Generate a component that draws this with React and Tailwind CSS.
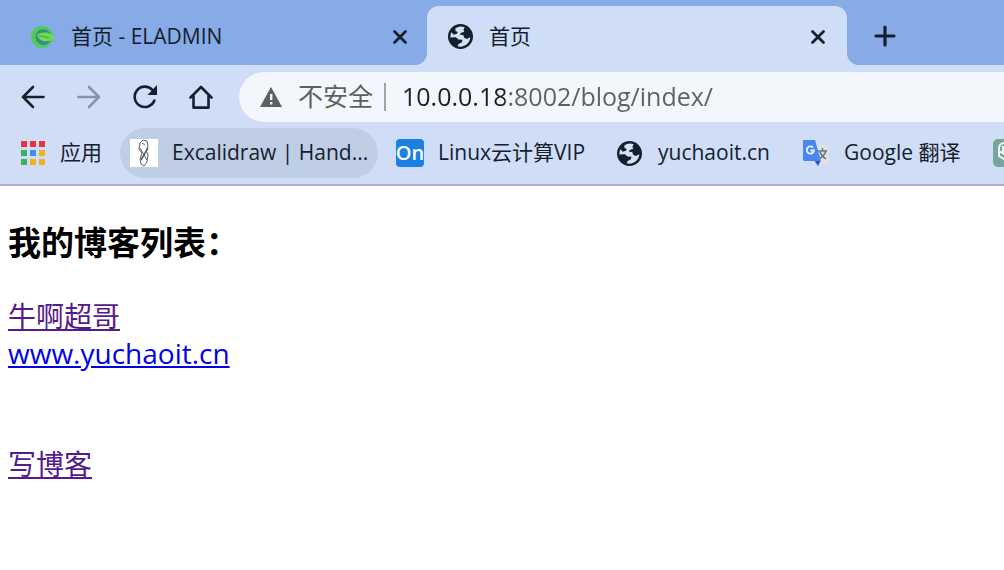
import React from 'react';
import clsx from 'clsx';

/*
  Browser window with two tabs, a toolbar, a bookmarks bar
  and the blog index page below.
*/

function GlobeIcon({ className }) {
  return (
    <svg viewBox="0 0 24 24" className={className} aria-hidden="true">
      <circle cx="12" cy="12" r="12" fill="#14212d" />
      <path
        fill="#d3e0f6"
        d="M7 4.2A9.6 9.6 0 0 1 16 3.200L14.8 5.600 15.600 7.400 12.200 8.600 11.400 10.200 14.600 10.600 15.600 13.200 18 14.400 21.500 12.600A9.800 9.800 0 0 1 9.200 21.400L10.200 19.200 13.400 17.600 13.800 15.200 10 14.800 7.600 12.800 2.300 13A9.800 9.800 0 0 1 3.200 8L5.600 10.200 8.600 9.400 9.400 7.600 7.200 6.800Z"
      />
    </svg>
  );
}

function LeafIcon({ className }) {
  return (
    <svg viewBox="0 0 24 24" className={className} aria-hidden="true">
      <circle cx="11" cy="12" r="11" fill="#4ccd58" />
      <path fill="#3a8f86" d="M19 8C15 2 7 4 5 9c-2 6 2 11 8 11 3 0 5-2 6-4L8 11z" />
      <path fill="#6fdc50" d="M6 10c4-3 10-3 13-1l5 3c-3 4-8 5-12 4-3-1-5-3-6-6z" />
      <path fill="none" stroke="#3a9f5e" strokeWidth="1" d="M8 11c4 0 7 1 10 2" />
    </svg>
  );
}

function CloseIcon({ className }) {
  return (
    <svg viewBox="0 0 16 16" className={className} fill="none" stroke="#14212d" strokeWidth="2.8" strokeLinecap="round" aria-hidden="true">
      <path d="M2.500 2.500l11 11M13.500 2.500l-11 11" />
    </svg>
  );
}

function ArrowIcon({ className }) {
  return (
    <svg viewBox="0 0 24 24" className={className} fill="none" stroke="currentColor" strokeWidth="2.6" strokeLinecap="round" aria-hidden="true">
      <path d="M22.500 12H2M12 2L2 12l10 10" />
    </svg>
  );
}

function ReloadIcon({ className }) {
  return (
    <svg viewBox="0 0 24 24" className={className} aria-hidden="true">
      <path fill="none" stroke="#14212d" strokeWidth="2.6" strokeLinecap="round" d="M21.4 15.5A10.2 10.2 0 1 1 19.5 5" />
      <path fill="#14212d" d="M24 0v10H14.5z" />
    </svg>
  );
}

function HomeIcon({ className }) {
  return (
    <svg viewBox="0 0 24 24" className={className} fill="none" stroke="#14212d" strokeWidth="2.6" strokeLinecap="round" strokeLinejoin="round" aria-hidden="true">
      <path d="M1.5 12.5L12 2l10.5 10.5M4.5 11v11.6h15V11" />
    </svg>
  );
}

function WarningIcon({ className }) {
  return (
    <svg viewBox="0 0 22 20" className={className} aria-hidden="true">
      <path fill="#5c6064" d="M11 0l11 20H0z" />
      <path fill="#f3f6fa" d="M10 7h2.4v6H10zM10 15h2.4v2.4H10z" />
    </svg>
  );
}

const dots = ['#e8343d', '#e8343d', '#e8343d', '#3fae5a', '#3f8ff0', '#efb021', '#3fae5a', '#efb021', '#efb021'];

function AppsIcon() {
  return (
    <span className="grid grid-cols-3 gap-[3px]" aria-hidden="true">
      {dots.map((c, i) => (
        <span key={i} className="size-1.5" style={{ background: c }} />
      ))}
    </span>
  );
}

function SketchIcon() {
  return (
    <svg viewBox="0 0 28 28" className="size-7 bg-white" fill="none" stroke="#5d6066" strokeWidth="1" aria-hidden="true">
      <path d="M10 4l3-3 4 1 1 5-2 5 2 3-1 8-3 4-3-2-1-5 2-6-3-4zM12 4l3 2M10 9l7 12" />
      <path strokeWidth="1.6" d="M18 9l-7 12" />
    </svg>
  );
}

function TranslateIcon() {
  return (
    <svg viewBox="0 0 28 28" className="size-7" aria-hidden="true">
      <path fill="#dfe1e3" d="M12 6h14l1 1v17l-1 1H17z" />
      <path fill="none" stroke="#6b7680" strokeWidth="1.5" d="M16 12h9M20.5 9v3M24 12c-1 4-4 6-7 8M18 13c1 3 3 5 6 7" />
      <path fill="#3a50b4" d="M12 21h7l-3 6z" />
      <path fill="#4a87ee" d="M1 1h12l6 21H2l-1-1z" />
      <path fill="none" stroke="#eef4ff" strokeWidth="1.8" d="M11 8.5a3.6 3.6 0 1 0 1 3H8.500" />
    </svg>
  );
}

const bookmarks = [
  { label: '应用', icon: <AppsIcon />, className: 'pl-[21px] pr-[18px] gap-[15px]' },
  { label: 'Excalidraw | Hand...', icon: <SketchIcon />, className: 'w-[258px] pl-[10px] gap-[14px] rounded-full bg-[#bfcee5]' },
  {
    label: 'Linux云计算VIP',
    icon: <span className="flex size-7 items-center justify-center rounded-sm bg-[#1c7fe2] text-xl font-semibold text-white">On</span>,
    className: 'w-[221px] pl-[18px] gap-[14px]'
  },
  { label: 'yuchaoit.cn', icon: <GlobeIcon className="size-[25px]" />, className: 'w-[185px] pl-[18px] gap-4' },
  { label: 'Google 翻译', icon: <TranslateIcon />, className: 'w-[191px] pl-[18px] gap-[14px]' }
];

export default function App() {
  return (
    <div className="min-h-screen bg-white font-['Open_Sans','Noto_Sans_CJK_SC',sans-serif] text-[#14212d]">
      <header className="overflow-hidden border-b-2 border-[#a9b1c9] bg-[#cfddf7]">
        {/* Tabs */}
        <div className="flex h-[65px] text-[21px]">
          <div className="flex w-[427px] shrink-0 items-center rounded-br-xl bg-[#87abe6] pt-2 pr-[17px] pl-[31px]">
            <LeafIcon className="size-6" />
            <span className="ml-4 flex-1">首页 - ELADMIN</span>
            <button type="button" aria-label="关闭" className="p-0.5">
              <CloseIcon className="size-4" />
            </button>
          </div>
          <div className="w-[420px] shrink-0 bg-[#87abe6] pt-1.5">
            <div className="flex h-full items-center rounded-t-xl bg-[#cfddf7] pt-0.5 pr-[19px] pl-[21px]">
              <GlobeIcon className="size-[25px]" />
              <span className="ml-4 flex-1">首页</span>
              <button type="button" aria-label="关闭" className="p-0.5">
                <CloseIcon className="size-4" />
              </button>
            </div>
          </div>
          <div className="flex flex-1 items-center rounded-bl-xl bg-[#87abe6] pt-1.5 pl-[27px]">
            <button type="button" aria-label="新标签页">
              <svg viewBox="0 0 22 22" className="size-[22px]" fill="none" stroke="#14212d" strokeWidth="3.2" strokeLinecap="round" aria-hidden="true">
                <path d="M11 2v18M2 11h18" />
              </svg>
            </button>
          </div>
        </div>

        {/* Toolbar */}
        <div className="flex h-[63px] items-center pl-[21px]">
          <nav className="flex items-center gap-8 pr-[26px]">
            <button type="button" aria-label="后退"><ArrowIcon className="size-6" /></button>
            <button type="button" aria-label="前进" className="text-[#8492ae]"><ArrowIcon className="size-6 rotate-180" /></button>
            <button type="button" aria-label="刷新"><ReloadIcon className="size-6" /></button>
            <button type="button" aria-label="主页"><HomeIcon className="size-6" /></button>
          </nav>
          <div className="flex h-[50px] flex-1 items-center rounded-l-full bg-[#f3f6fa] pl-[21px] text-[25px] text-[#5c6064]">
            <WarningIcon className="h-5 w-[22px]" />
            <label htmlFor="address" className="ml-4 whitespace-nowrap">不安全</label>
            <span className="ml-[11px] h-7 w-0.5 bg-[#a0a4aa]" />
            <input
              id="address"
              type="text"
              defaultValue="10.0.0.18:8002/blog/index/"
              className="ml-4 min-w-0 flex-1 bg-linear-to-r from-[#14212d] from-[103px] to-[#5c6064] to-[103px] bg-clip-text text-transparent outline-none"
            />
          </div>
        </div>

        {/* Bookmarks */}
        <nav className="flex h-14 items-start text-[21px]">
          {bookmarks.map((b) => (
            <a key={b.label} href="#" className={clsx('flex h-[50px] shrink-0 items-center whitespace-nowrap', b.className)}>
              {b.icon}
              <span>{b.label}</span>
            </a>
          ))}
          <a href="#" aria-label="GPT" className="flex h-[50px] shrink-0 items-center pl-[18px]">
            <svg viewBox="0 0 28 28" className="size-7" fill="none" aria-hidden="true">
              <rect width="28" height="28" rx="5" fill="#75a697" />
              <path stroke="#eef8f4" strokeWidth="2" d="M14 5a5 5 0 0 0-8 4v8l8 5 8-5V9l-8-4zM6 12l8 5 8-5M10 7v8" />
            </svg>
          </a>
        </nav>
      </header>

      <main className="px-2 pt-8 text-[28px] leading-[37px]">
        <h3 className="text-[33px] leading-[50px] font-bold text-black">我的博客列表：</h3>
        <div className="mt-[30px] flex flex-col items-start">
          <a href="#" className="text-[#551a8b] underline">牛啊超哥</a>
          <a href="#" className="text-[#0000ee] underline">www.yuchaoit.cn</a>
          <a href="#" className="mt-[74px] text-[#551a8b] underline">写博客</a>
        </div>
      </main>
    </div>
  );
}
